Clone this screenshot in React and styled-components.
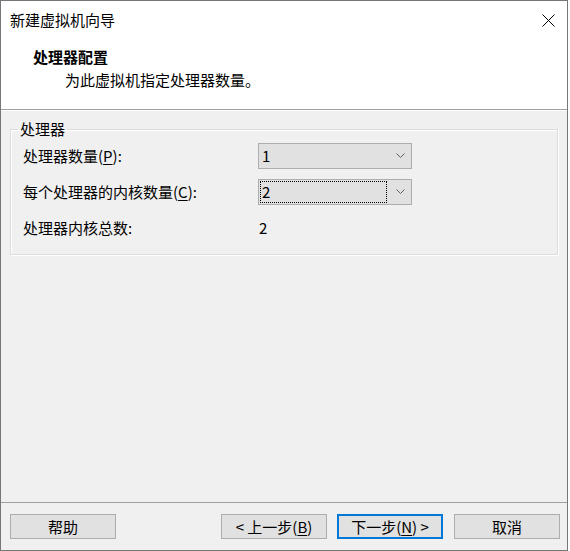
import React from 'react'
import styled, { createGlobalStyle } from 'styled-components'

const Global = createGlobalStyle`
html,body{margin:0;padding:0;background:#fff;}
body{font-family:"Noto Sans CJK SC","Microsoft YaHei",sans-serif;font-size:15px;color:#000;}
*{box-sizing:border-box;}
`

const Window = styled.div`
width:568px;
height:551px;
border:1px solid #767676;
display:flex;
flex-direction:column;
background:#f0f0f0;
`

const Header = styled.div`
background:#fff;
height:109px;
border-bottom:1px solid #a0a0a0;
display:flex;
flex-direction:column;
`

const TitleBar = styled.div`
height:38px;
display:flex;
align-items:center;
justify-content:space-between;
padding:0 12px 0 9px;
font-size:15px;
line-height:20px;
`

const Close = styled.svg`
width:13px;
height:13px;
`

const Heading = styled.div`
margin-top:7px;
padding-left:32px;
font-weight:bold;
line-height:22px;
`

const Sub = styled.div`
padding-left:64px;
line-height:22px;
margin-top:1px;
`

const Body = styled.div`
flex:1;
display:flex;
flex-direction:column;
border-top:1px solid #fff;
`

const Group = styled.fieldset`
margin:8px 9px 0 9px;
padding:0 12px 13px 12px;
border:1px solid #dcdcdc;
box-shadow:inset 1px 1px 0 #fff,1px 1px 0 #fff;
min-width:0;
`

const Legend = styled.legend`
padding:0 2px;
margin-left:-5px;
line-height:20px;
`

const Grid = styled.div`
display:grid;
grid-template-columns:235px 154px;
grid-auto-rows:26px;
row-gap:10px;
padding-top:4px;
align-items:center;
line-height:20px;
`

const Label = styled.div`
white-space:nowrap;
`

const Select = styled.div`
position:relative;
height:26px;
background:#e1e1e1;
border:1px solid #adadad;
display:flex;
align-items:center;
padding-left:3px;
`

const Focus = styled.div`
position:absolute;
left:1px;
top:1px;
bottom:1px;
right:24px;
border:1px dotted #000;
`

const Chevron = styled.svg`
position:absolute;
right:6px;
top:9px;
width:9px;
height:6px;
`

const Value = styled.div`
padding-left:1px;
`

const Spacer = styled.div`
flex:1;
`

const Footer = styled.div`
border-top:1px solid #a0a0a0;
height:48px;
display:flex;
align-items:flex-start;
justify-content:space-between;
padding:11px 7px 0 9px;
`

const Nav = styled.div`
display:flex;
gap:10px;
`

const Button = styled.button`
width:106px;
height:25px;
margin-left:${({ $gap }) => $gap || 0}px;
background:#e1e1e1;
border:1px solid ${({ $primary }) => ($primary ? '#0078d7' : '#adadad')};
box-shadow:${({ $primary }) => ($primary ? 'inset 0 0 0 1px #0078d7' : 'none')};
font-family:inherit;
font-size:15px;
line-height:20px;
color:#000;
padding:0;
`

const Mark = styled.u`
text-underline-offset:2px;
`

const Arrow = () => (
  <Chevron viewBox="0 0 9 6">
    <path d="M0.5 0.5 L4.5 4.5 L8.5 0.5" fill="none" stroke="#606060" strokeWidth="1" />
  </Chevron>
)

export default function App() {
  return (
    <>
      <Global />
      <Window>
        <Header>
          <TitleBar>
            <span>新建虚拟机向导</span>
            <Close viewBox="0 0 13 13">
              <path d="M0.5 0.5 L12.5 12.5 M12.5 0.5 L0.5 12.5" stroke="#000" strokeWidth="1" />
            </Close>
          </TitleBar>
          <Heading>处理器配置</Heading>
          <Sub>为此虚拟机指定处理器数量。</Sub>
        </Header>
        <Body>
          <Group>
            <Legend>处理器</Legend>
            <Grid>
              <Label>处理器数量(<Mark>P</Mark>):</Label>
              <Select>
                1
                <Arrow />
              </Select>
              <Label>每个处理器的内核数量(<Mark>C</Mark>):</Label>
              <Select>
                2
                <Focus />
                <Arrow />
              </Select>
              <Label>处理器内核总数:</Label>
              <Value>2</Value>
            </Grid>
          </Group>
          <Spacer />
          <Footer>
            <Button>帮助</Button>
            <Nav>
              <Button>&lt; 上一步(<Mark>B</Mark>)</Button>
              <Button $primary>下一步(<Mark>N</Mark>) &gt;</Button>
              <Button $gap={1}>取消</Button>
            </Nav>
          </Footer>
        </Body>
      </Window>
    </>
  )
}
